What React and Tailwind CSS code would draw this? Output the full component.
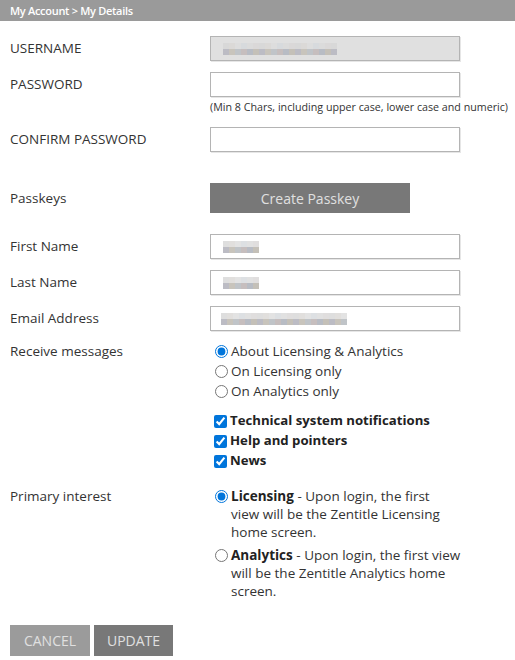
import React from "react";

const FONT = { fontFamily: '"Open Sans", "Noto Sans", sans-serif' };

function Blur({ n }) {
  const tops = ["#d6d6d6", "#d9d7d4", "#dcdcdc", "#d5d8dc", "#dadada", "#d8d6d6"];
  const bots = ["#bcbcc4", "#c4c0b8", "#b8bcc4", "#c6bebe", "#c0c4c8", "#c8c4bc"];
  const cells = Array.from({ length: n });
  return (
    <div className="flex flex-col">
      <div className="flex">
        {cells.map((_, i) => (
          <span key={i} className="block w-[6px] h-[6px]" style={{ background: tops[i % 6], opacity: 0.8 }} />
        ))}
      </div>
      <div className="flex">
        {cells.map((_, i) => (
          <span key={i} className="block w-[6px] h-[6px]" style={{ background: bots[(i * 5) % 6] }} />
        ))}
      </div>
    </div>
  );
}

function Field({ label, children, className = "" }) {
  return (
    <div className={"flex items-center " + className}>
      <div className="w-[200px] shrink-0 text-[13.5px] text-[#333]">{label}</div>
      {children}
    </div>
  );
}

function Input({ disabled, blur, blurX = 12 }) {
  return (
    <div
      className={
        "w-[250px] h-[25px] border border-[#b4b4b4] shadow-[1px_1px_0_#e6e6e6] flex items-center " +
        (disabled ? "bg-[#e0e0e0]" : "bg-white")
      }
      style={{ paddingLeft: blurX }}
    >
      {blur ? <Blur n={blur} /> : null}
    </div>
  );
}

function Radio({ checked, children, className = "", name }) {
  return (
    <label className={"flex items-start text-[13.5px] text-[#333] leading-[18px] " + className}>
      <input
        type="radio"
        defaultChecked={checked}
        name={name}
        className="ml-[5px] mr-[3px] mt-[3px] w-[13px] h-[13px] shrink-0 accent-[#0075db]"
      />
      <span>{children}</span>
    </label>
  );
}

function RadioRow({ checked, children, name }) {
  return (
    <label className="flex items-center h-[20px] text-[13.5px] text-[#333]">
      <input
        type="radio"
        defaultChecked={checked}
        name={name}
        className="ml-[5px] mr-[3px] w-[13px] h-[13px] shrink-0 accent-[#0075db]"
      />
      <span>{children}</span>
    </label>
  );
}

function Check({ children }) {
  return (
    <label className="flex items-center text-[13.2px] text-[#222] font-bold h-[20px]">
      <input type="checkbox" defaultChecked className="ml-[4px] mr-[3px] w-[13px] h-[13px] accent-[#0075db]" />
      <span>{children}</span>
    </label>
  );
}

export default function App() {
  return (
    <div className="w-[515px] h-[660px] bg-white" style={FONT}>
      <div className="h-[21px] bg-[#9a9a9a] text-white text-[11px] tracking-[-0.3px] font-semibold leading-[21px] px-[10px]">
        My Account &gt; My Details
      </div>
      <div className="pl-[10px] pt-[15px]">
        <Field label="USERNAME">
          <Input disabled blur={19} />
        </Field>
        <Field label="PASSWORD" className="mt-[11px]">
          <Input />
        </Field>
        <div className="pl-[200px] text-[10.7px] text-[#333] mt-[3px] leading-[14px] whitespace-nowrap">
          (Min 8 Chars, including upper case, lower case and numeric)
        </div>
        <Field label="CONFIRM PASSWORD" className="mt-[13px]">
          <Input />
        </Field>
        <Field label="Passkeys" className="mt-[31px]">
          <button className="w-[200px] h-[30px] bg-[#787878] text-[#e0e0e0] text-[14px]">Create Passkey</button>
        </Field>
        <Field label="First Name" className="mt-[21px]">
          <Input blur={6} />
        </Field>
        <Field label="Last Name" className="mt-[11px]">
          <Input blur={6} />
        </Field>
        <Field label="Email Address" className="mt-[11px]">
          <Input blur={21} blurX={10} />
        </Field>

        <div className="flex mt-[10px]">
          <div className="w-[200px] shrink-0 text-[13.5px] text-[#333] leading-[20px]">Receive messages</div>
          <div className="flex flex-col">
            <RadioRow checked name="rm">About Licensing &amp; Analytics</RadioRow>
            <RadioRow name="rm">On Licensing only</RadioRow>
            <RadioRow name="rm">On Analytics only</RadioRow>
            <div className="mt-[10px]">
              <Check>Technical system notifications</Check>
              <Check>Help and pointers</Check>
              <Check>News</Check>
            </div>
          </div>
        </div>

        <div className="flex mt-[16px]">
          <div className="w-[200px] shrink-0 text-[13.5px] text-[#333] leading-[18px]">Primary interest</div>
          <div className="flex flex-col whitespace-nowrap">
            <Radio checked name="pi">
              <b className="font-bold text-[#222]">Licensing</b> - Upon login, the first
              <br />
              view will be the Zentitle Licensing
              <br />
              home screen.
            </Radio>
            <Radio name="pi" className="mt-[5px]">
              <b className="font-bold text-[#222]">Analytics</b> - Upon login, the first view
              <br />
              will be the Zentitle Analytics home
              <br />
              screen.
            </Radio>
          </div>
        </div>

        <div className="flex gap-[4px] mt-[25px]">
          <button className="w-[80px] h-[31px] bg-[#9b9b9b] text-[#e0e0e0] text-[14px]">CANCEL</button>
          <button className="w-[79px] h-[31px] bg-[#787878] text-[#e0e0e0] text-[14px]">UPDATE</button>
        </div>
      </div>
    </div>
  );
}
